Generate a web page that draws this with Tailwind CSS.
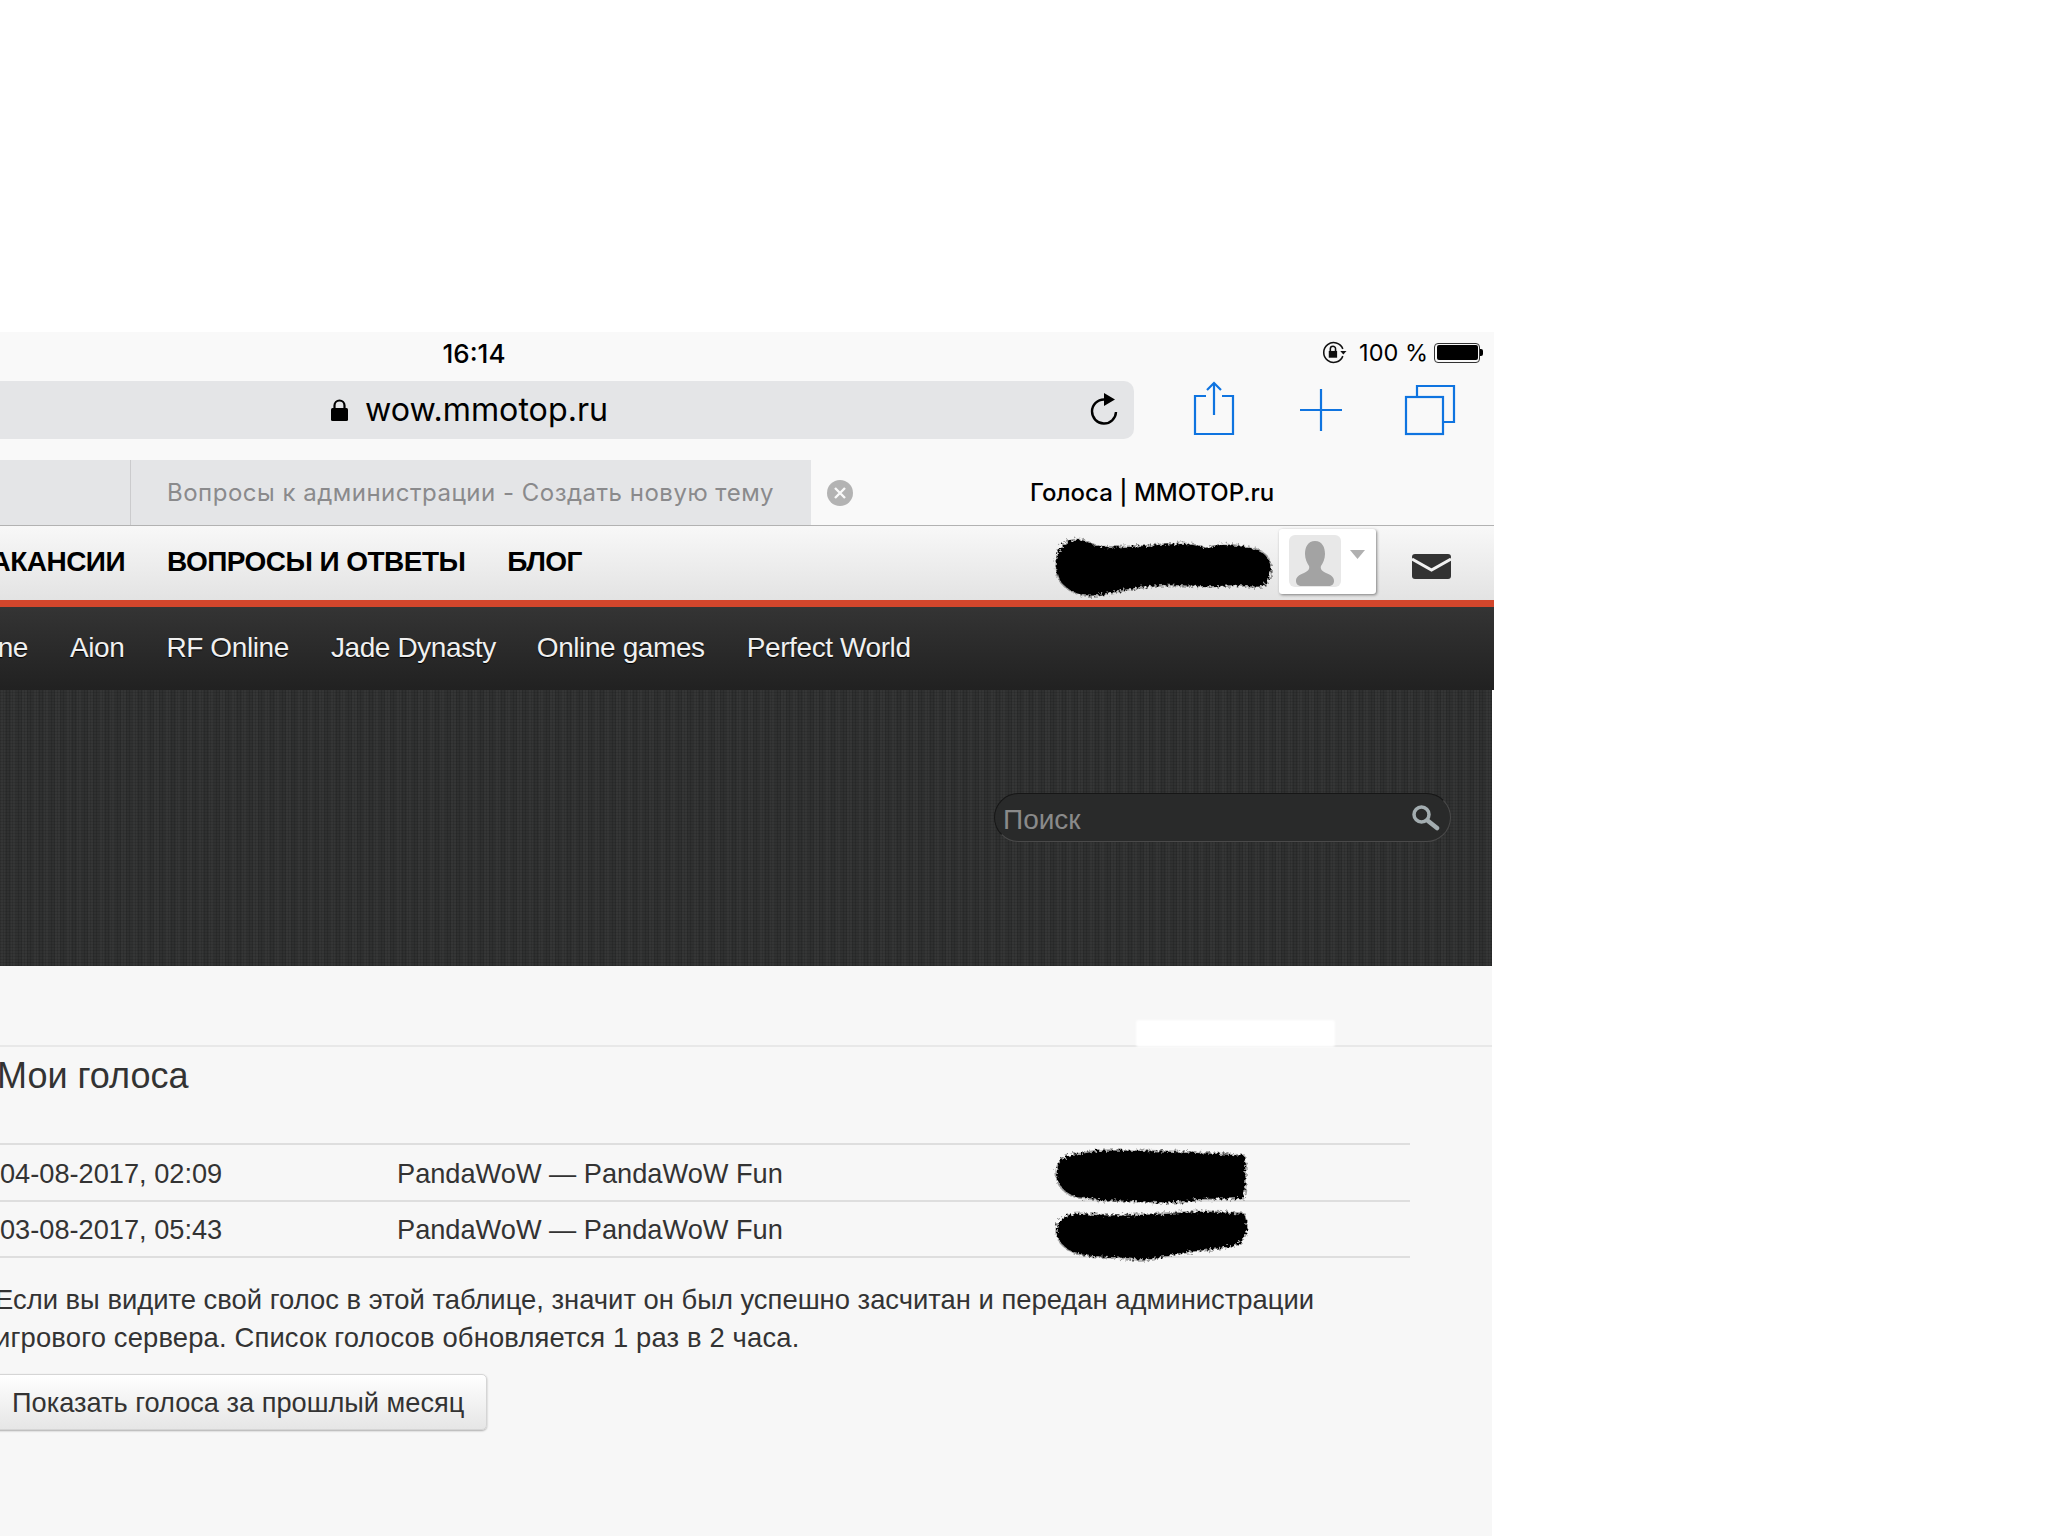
<!DOCTYPE html>
<html lang="ru">
<head>
<meta charset="UTF-8">
<title>Голоса | MMOTOP.ru</title>
<script src="https://cdn.jsdelivr.net/npm/@tailwindcss/browser@4"></script>
</head>
<body class="bg-white font-['Liberation_Sans',Arial,sans-serif]">
<svg width="0" height="0" class="absolute">
  <filter id="rough" x="-10%" y="-20%" width="120%" height="140%">
    <feTurbulence type="fractalNoise" baseFrequency="0.35" numOctaves="2" seed="4"/>
    <feDisplacementMap in="SourceGraphic" scale="7"/>
  </filter>
</svg>

<div class="relative h-[1536px] w-[2048px] overflow-hidden pt-[332px]">
  <div class="w-[1494px] bg-[#f9f9f9]">
    <!-- status bar -->
    <div class="relative flex h-[49px] items-center justify-end pb-[8px] font-['Inter',sans-serif] text-black">
      <span class="absolute left-[436px] top-[2px] w-[76px] text-center text-[26px] font-medium">16:14</span>
      <svg class="mr-[12px]" width="25" height="23" viewBox="0 0 24 22" fill="none" stroke="#111" stroke-width="1.5">
        <path d="M20 14.5A9.5 9.5 0 1 1 20 7.5"/>
        <path d="M17.5 9.5h6l-3 3.5z" fill="#111" stroke="none"/>
        <rect x="6.5" y="9.5" width="8" height="6.5" fill="#111" stroke="none"/>
        <path d="M8 9.500V7.500a2.500 2.500 0 0 1 5 0v2"/>
      </svg>
      <span class="mr-[6px] text-[23.5px]">100 %</span>
      <div class="mr-[11px] flex items-center">
        <div class="h-[20px] w-[46px] rounded-[4px] border border-[#333] p-[1.5px]"><div class="h-full w-full rounded-[2px] bg-black"></div></div>
        <div class="h-[7px] w-[3px] rounded-r-[2px] bg-black"></div>
      </div>
    </div>

    <!-- address bar -->
    <div class="flex h-[58px] items-center">
      <div class="relative flex h-[58px] w-[1134px] items-center rounded-r-[10px] bg-[#e4e5e7] pl-[331px] font-['Inter',sans-serif] text-[32.2px] text-black">
        <svg width="17" height="22" viewBox="0 0 17 22" class="mr-[17px]">
          <path d="M3.5 10V6.5a5 5 0 0 1 10 0V10" fill="none" stroke="#000" stroke-width="2.2"/>
          <rect y="9" width="17" height="13" rx="1.5" fill="#000"/>
        </svg>
        <span>wow.mmotop.ru</span>
        <svg class="absolute left-[1089px] top-[11px]" width="32" height="34" viewBox="0 0 32 34" fill="none">
          <path d="M15 7.5A12 12 0 1 0 27 20" stroke="#000" stroke-width="2.4"/>
          <path d="M15 1l11 6.5L15 14z" fill="#000"/>
        </svg>
      </div>
      <svg class="ml-[56px]" width="48" height="58" viewBox="1190 381 48 58" fill="none" stroke="#0f74e0" stroke-width="2.2">
        <path d="M1206 396h-11v38h38v-38h-11"/>
        <path d="M1214 415v-32"/>
        <path d="M1207 390l7-7 7 7"/>
      </svg>
      <svg class="ml-[58px]" width="50" height="58" viewBox="1296 381 50 58" fill="none" stroke="#0f74e0" stroke-width="2.2">
        <path d="M1321 389v42M1300 410h42"/>
      </svg>
      <svg class="ml-[54px]" width="60" height="58" viewBox="1400 381 60 58" fill="none" stroke="#0f74e0" stroke-width="2.2">
        <rect x="1406" y="397" width="37" height="37"/>
        <path d="M1417 396v-10h37v36h-10"/>
      </svg>
    </div>

    <!-- tabs -->
    <div class="mt-[21px] flex h-[66px] border-b border-[#b2b2b2] font-['Inter',sans-serif]">
      <div class="w-[130px] bg-[#e4e5e7]"></div>
      <div class="flex w-[681px] items-center whitespace-nowrap border-l border-[#cbcbcd] bg-[#e4e5e7] pl-[36px] text-[24px] tracking-[0.5px] text-[#8a8a8c]">Вопросы к администрации - Создать новую тему</div>
      <div class="flex flex-1 items-center pl-[16px]">
        <svg width="26" height="26" viewBox="0 0 26 26">
          <circle cx="13" cy="13" r="13" fill="#b3b3b3"/>
          <path d="M8 8l10 10M18 8L8 18" stroke="#f9f9f9" stroke-width="2.4"/>
        </svg>
        <span class="ml-[177px] text-[24px] font-medium text-black">Голоса | MMOTOP.ru</span>
      </div>
    </div>
  </div>

  <!-- site top menu -->
  <div class="relative flex h-[74px] w-[1494px] items-center bg-gradient-to-b from-[#f8f8f8] to-[#e3e3e3] pb-[2px] text-[28px] font-bold tracking-[-0.55px] text-black">
    <div class="flex w-[125px] justify-end overflow-hidden whitespace-nowrap">ВАКАНСИИ</div>
    <span class="ml-[42px]">ВОПРОСЫ И ОТВЕТЫ</span>
    <span class="ml-[42px]">БЛОГ</span>
    <div class="absolute left-[1279px] top-[3px] flex h-[65px] w-[97px] gap-[9px] rounded-[3px] bg-white pl-[10px] pt-[6px] shadow-[1px_1px_3px_rgba(0,0,0,0.45)]">
      <div class="flex h-[52px] w-[52px] items-end justify-center rounded-[6px] bg-[#e8e8e8]">
        <svg width="42" height="48" viewBox="0 0 42 48" fill="#a3a3a3">
          <path d="M21 2c7 0 10 6 10 13 0 5-2 9-4 12-1 3 1 5 5 7 5 2 8 4 8 8 0 3-2 5-6 5H8c-4 0-6-2-6-5 0-4 3-6 8-8 4-2 6-4 5-7-2-3-4-7-4-12 0-7 3-13 10-13z"/>
        </svg>
      </div>
      <svg class="mt-[15px]" width="15" height="9" viewBox="0 0 15 9"><path d="M0 0h15L7.500 9z" fill="#b0b0b0"/></svg>
    </div>
    <svg class="absolute left-[1412px] top-[28px]" width="39" height="25" viewBox="0 0 39 25">
      <rect width="39" height="25" rx="3" fill="#333"/>
      <path d="M0 5l19.500 11L39 5" fill="none" stroke="#f2f2f2" stroke-width="3"/>
    </svg>
  </div>

  <!-- game menu -->
  <div class="w-[1494px] border-t-[7px] border-[#d2462c]">
    <div class="flex h-[83px] items-center bg-gradient-to-b from-[#343434] to-[#212121] pb-[2px] text-[28px] tracking-[-0.4px] text-[#f0f0f0] [text-shadow:0_1px_1px_#000]">
      <div class="flex w-[28px] justify-end overflow-hidden whitespace-nowrap">Online</div>
      <span class="ml-[42px]">Aion</span>
      <span class="ml-[42px]">RF Online</span>
      <span class="ml-[42px]">Jade Dynasty</span>
      <span class="ml-[41px]">Online games</span>
      <span class="ml-[42px]">Perfect World</span>
    </div>
  </div>

  <!-- hero with search -->
  <div class="h-[276px] w-[1492px] bg-[#2c2d2d] bg-[repeating-linear-gradient(0deg,rgba(0,0,0,0.1)_0,rgba(0,0,0,0.1)_1px,transparent_1px,transparent_3px),repeating-linear-gradient(90deg,rgba(255,255,255,0.025)_0,rgba(255,255,255,0.025)_5px,transparent_5px,transparent_11px),repeating-linear-gradient(90deg,#2a2b2b_0,#2a2b2b_1px,#303131_1px,#303131_3px)] pl-[994px] pt-[103px]">
    <div class="flex h-[49px] w-[457px] items-center justify-between rounded-full border border-[#4a4a4a] border-t-[#161616] border-l-[#161616] bg-[#292a2a] pl-[8px] pr-[10px] text-[28px] text-[#8a8a8a]">
      <span class="pt-[5px]">Поиск</span>
      <svg width="30" height="30" viewBox="0 0 30 30" fill="none">
        <circle cx="11.500" cy="11.500" r="7.500" stroke="#a3adb0" stroke-width="3.500"/>
        <path d="M17.500 17.500L27 25" stroke="#a3adb0" stroke-width="4.500" stroke-linecap="round"/>
      </svg>
    </div>
  </div>

  <!-- content -->
  <div class="relative h-[570px] w-[1492px] bg-[#f7f7f7] pt-[79px] text-[#333]">
    <div class="border-t-2 border-[#e8e8e8]"></div>
    <div class="absolute left-[1136px] top-[54px] h-[27px] w-[199px] rounded-[3px] bg-white blur-[1px]"></div>
    <h1 class="-ml-[3px] mt-[6px] h-[50px] text-[36px] leading-[46px] font-normal">Мои голоса</h1>
    <div class="mt-[40px] w-[1410px] border-t-2 border-[#dedede] text-[27.2px]">
      <div class="grid h-[57px] grid-cols-[397px_1fr] items-center border-b-2 border-[#dedede] pt-[3px]"><span>04-08-2017, 02:09</span><span>PandaWoW — PandaWoW Fun</span></div>
      <div class="grid h-[56px] grid-cols-[397px_1fr] items-center border-b-2 border-[#dedede] pt-[2px]"><span>03-08-2017, 05:43</span><span>PandaWoW — PandaWoW Fun</span></div>
    </div>
    <p class="-ml-[5px] mt-[23px] text-[27.4px] leading-[38px]">Если вы видите свой голос в этой таблице, значит он был успешно засчитан и передан администрации<br><span class="tracking-[0.15px]">игрового сервера. Список голосов обновляется 1 раз в 2 часа.</span></p>
    <button class="-ml-[10px] mt-[17px] flex h-[56px] w-[497px] items-center rounded-[5px] border border-[#d5d5d5] bg-gradient-to-b from-white to-[#e6e6e6] pl-[21px] pt-[2px] text-[27.2px] text-[#333] shadow-[0_1px_2px_rgba(0,0,0,0.3)]">Показать голоса за прошлый месяц</button>
  </div>

  <!-- redaction scribbles over the screenshot -->
  <svg class="absolute left-0 top-0" width="2048" height="1536" viewBox="0 0 2048 1536">
    <g filter="url(#rough)" fill="#000" stroke="#000" stroke-opacity="0.35" stroke-width="3">
      <path d="M1056 564c0-14 8-24 22-24 10 0 14 6 22 7 24 2 60-3 84-3 12 0 14 4 26 4 6-4 16-3 26-2 18 2 30 4 34 18 2 10-2 20-8 22-12 2-20-2-30-1-22 2-34 1-52 0-22-1-38 2-52 4-8 2-14 2-22 4-8 3-22 4-32-1-12-6-18-14-18-28z"/>
      <path d="M1057 1170c2-12 12-16 24-16l16-3c30-1 80 1 120 3l27 2c2 12 2 34-1 42l-45 1c-20 4-30 4-60 2l-40-1c-10-4-20 0-28-6-8-4-14-12-13-24z"/>
      <path d="M1057 1228c2-10 10-14 24-14 30 3 70 1 100-1 20-2 43-1 63 1 5 12 2 24-6 30-20 6-43 6-63 10-20 4-30 6-40 5-20-3-40-1-60-6-10-5-20-13-18-25z"/>
    </g>
  </svg>
</div>
</body>
</html>
